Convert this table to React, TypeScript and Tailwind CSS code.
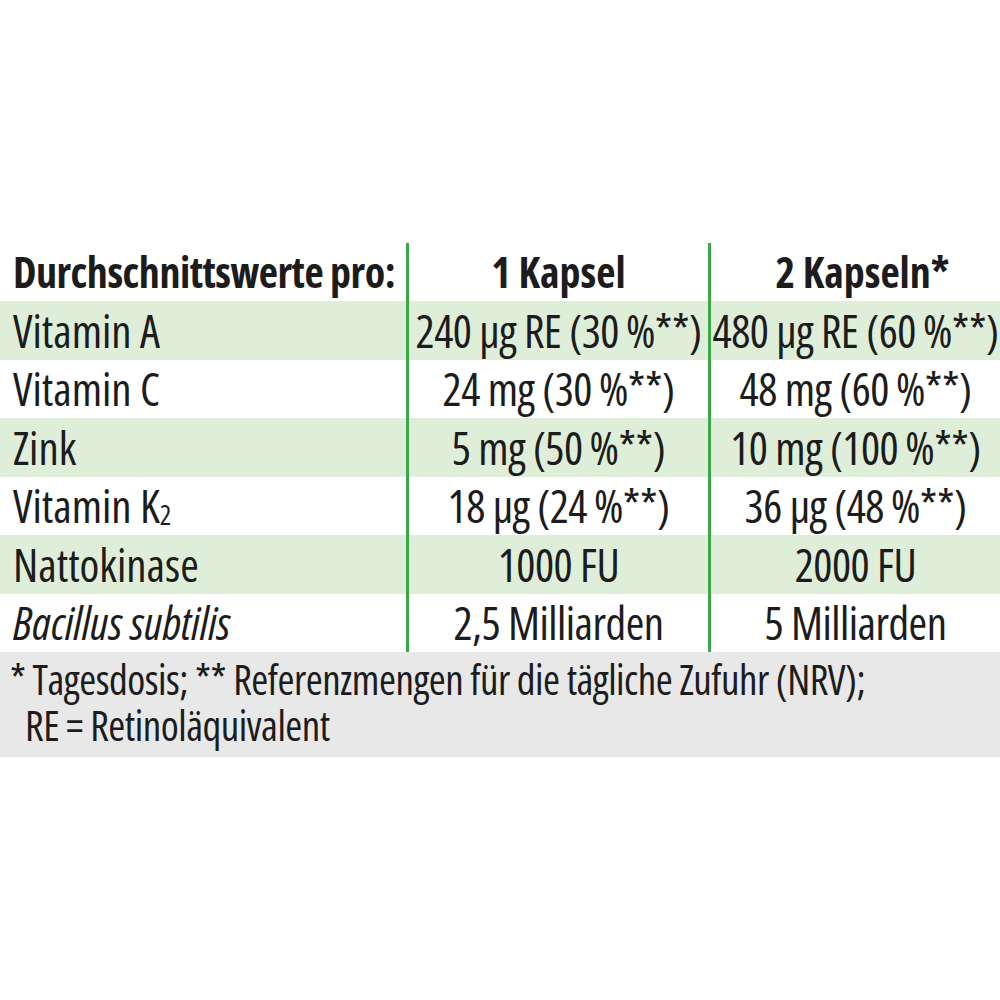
import React from "react";

const rows: { name: React.ReactNode; a: string; b: string; green: boolean }[] = [
  { name: "Vitamin A", a: "240 µg RE (30\u2009%**)", b: "480 µg RE (60\u2009%**)", green: true },
  { name: "Vitamin C", a: "24 mg (30\u2009%**)", b: "48 mg (60\u2009%**)", green: false },
  { name: "Zink", a: "5 mg (50\u2009%**)", b: "10 mg (100\u2009%**)", green: true },
  {
    name: (
      <>
        Vitamin K<span className="text-[27px] relative top-[9px]">2</span>
      </>
    ),
    a: "18 µg (24\u2009%**)",
    b: "36 µg (48\u2009%**)",
    green: false,
  },
  { name: "Nattokinase", a: "1000 FU", b: "2000 FU", green: true },
  { name: <i>Bacillus subtilis</i>, a: "2,5 Milliarden", b: "5 Milliarden", green: false },
];

export default function App() {
  return (
    <div className="w-[1000px] h-[1000px] bg-white text-[#1c1c1c] overflow-hidden font-['Open_Sans',sans-serif] [font-stretch:75%]">
      <div className="h-[243px]" />
      <div className="grid grid-cols-[409px_302px_289px]">
        <div className="h-[58px] flex items-center pl-[13px] font-bold text-[42px] tracking-[-0.5px] leading-none whitespace-nowrap border-r-[3px] border-[#3aa845]">Durchschnittswerte pro:</div>
        <div className="h-[58px] flex items-center justify-center font-bold text-[42px] leading-none whitespace-nowrap border-r-[3px] border-[#3aa845]">1 Kapsel</div>
        <div className="h-[58px] flex items-center justify-center pl-[14px] font-bold text-[42px] leading-none whitespace-nowrap">2 Kapseln*</div>
        {rows.map((r, i) => (
          <React.Fragment key={i}>
            <div className={`h-[58.5px] flex items-center pl-[13px] text-[45px] leading-none whitespace-nowrap border-r-[3px] border-[#3aa845] ${r.green ? "bg-[#dfeed9]" : "bg-white"}`}>{r.name}</div>
            <div className={`h-[58.5px] flex items-center justify-center text-[45px] tracking-[-0.5px] leading-none whitespace-nowrap border-r-[3px] border-[#3aa845] ${r.green ? "bg-[#dfeed9]" : "bg-white"}`}>{r.a}</div>
            <div className={`h-[58.5px] flex items-center justify-center text-[45px] tracking-[-0.5px] leading-none whitespace-nowrap ${r.green ? "bg-[#dfeed9]" : "bg-white"}`}>{r.b}</div>
          </React.Fragment>
        ))}
      </div>
      <div className="h-[105px] bg-[#e8e8e8] pl-[10px] pt-[4px] text-[41px] tracking-[-0.5px] leading-[46px] whitespace-nowrap">
        <div>* Tagesdosis; ** Referenzmengen für die tägliche Zufuhr (NRV);</div>
        <div className="pl-[15px]">RE = Retinoläquivalent</div>
      </div>
    </div>
  );
}
